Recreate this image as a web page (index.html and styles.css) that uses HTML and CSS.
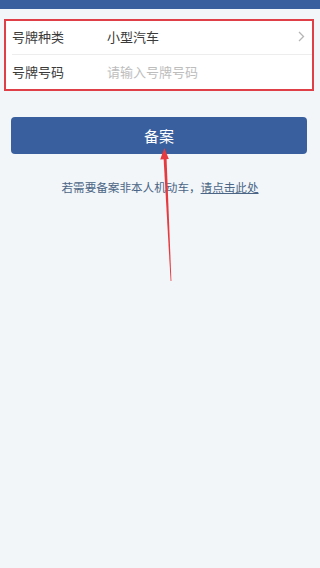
FILE: index.html
```html
<!DOCTYPE html>
<html lang="zh">
<head>
<meta charset="utf-8">
<link rel="stylesheet" href="styles.css">
</head>
<body>
<div class="topbar"></div>
<div class="card">
  <div class="row">
    <div class="row-inner divider">
      <span class="label">号牌种类</span>
      <span class="value">小型汽车</span>
      <svg class="chev" width="7" height="11" viewBox="0 0 7 11"><path d="M1 1 L5.5 5.5 L1 10" fill="none" stroke="#b5b5b5" stroke-width="1.3"/></svg>
    </div>
  </div>
  <div class="row">
    <div class="row-inner">
      <span class="label">号牌号码</span>
      <span class="placeholder">请输入号牌号码</span>
    </div>
  </div>
</div>
<div class="btn">备案</div>
<p class="note">若需要备案非本人机动车，<span class="link">请点击此处</span></p>
<svg class="arrow" width="320" height="568" viewBox="0 0 320 568">
  <polygon points="170.6,281 171.4,281 166.5,157 163.5,157" fill="#e53a3f"/>
  <polygon points="164.3,148 168.8,159 160.2,159.4" fill="#e53a3f"/>
</svg>
</body>
</html>
```
FILE: styles.css
```css
html, body {
  margin: 0;
  padding: 0;
}
body {
  background: #f2f6f9;
  font-family: "Noto Sans CJK SC", "Noto Sans", sans-serif;
  width: 320px;
  height: 568px;
  position: relative;
  overflow: hidden;
}
.topbar {
  height: 9px;
  background: #3a5f9e;
}
.card {
  margin: 10px 6px 0 4px;
  border: 2px solid #df3f46;
  background: #fff;
}
.row {
  height: 34px;
  padding-left: 6px;
}
.row-inner {
  height: 100%;
  display: flex;
  align-items: center;
  box-sizing: border-box;
  padding-right: 7px;
  padding-bottom: 2px;
}
.divider {
  border-bottom: 1px solid #ededed;
}
.label {
  width: 95px;
  font-size: 13px;
  color: #3a3a3a;
}
.value {
  flex: 1;
  font-size: 13px;
  color: #3a3a3a;
}
.placeholder {
  flex: 1;
  font-size: 13px;
  color: #bdbdbd;
}
.chev {
  display: block;
}
.btn {
  margin: 26px 13px 0 11px;
  height: 37px;
  border-radius: 4px;
  background: #3a5f9e;
  color: #fff;
  font-size: 15px;
  display: flex;
  align-items: center;
  justify-content: center;
}
.note {
  margin: 25px 0 0;
  text-align: center;
  font-size: 11.6px;
  line-height: 16px;
  color: #4a6585;
}
.link {
  text-decoration: underline;
}
.arrow {
  position: absolute;
  left: 0;
  top: 0;
}
```
